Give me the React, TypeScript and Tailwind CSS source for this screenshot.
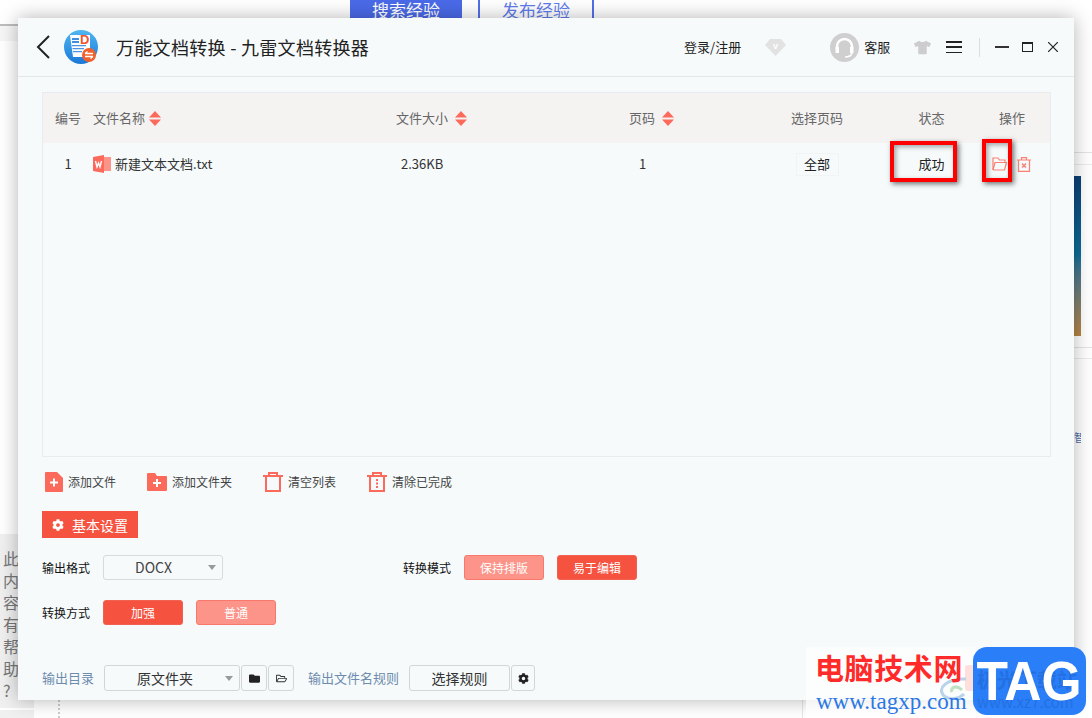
import React from "react";
import { FaCog, FaFolder, FaRegFolderOpen, FaTshirt } from "react-icons/fa";

const font = { fontFamily: '"Noto Sans CJK SC", "Liberation Sans", sans-serif' };

function Sort({ wide }: { wide?: boolean }) {
  return (
    <svg width="12" height="15" viewBox="0 0 12 15" className={wide ? "ml-[7px] shrink-0" : "ml-[4px] shrink-0"}>
      <path d="M6 0 L12 6.5 H0 Z M0 8.5 H12 L6 15 Z" fill="#fb6a5b" />
    </svg>
  );
}

function Logo() {
  return (
    <svg width="34" height="34" viewBox="0 0 34 34" className="ml-[14px] shrink-0">
      <defs>
        <linearGradient id="lg" x1="0" y1="0" x2="0" y2="1">
          <stop offset="0" stopColor="#4fb6f2" />
          <stop offset="1" stopColor="#1a78d8" />
        </linearGradient>
      </defs>
      <circle cx="17" cy="17" r="17" fill="url(#lg)" />
      <path d="M6 5 H26 V27 H9 Z" fill="#fff" />
      <path d="M8 8 H15 V10 H8 Z M8 11 H15 V13 H8 Z" fill="#3f8fe0" />
      <path d="M8 15 H22 V16.200 H8 Z M8.500 18 H20 V19.200 H8.500 Z M9 21 H18 V22.200 H9 Z" fill="#4a94e0" />
      <text x="16" y="14" fontSize="13" fontWeight="700" fill="#f0562f" fontFamily="Liberation Sans">D</text>
      <circle cx="25" cy="25" r="7" fill="#f0602c" />
      <path d="M21 23.500 H29 M21 23.500 L23.500 21.500 M29 26.500 H21 M29 26.500 L26.500 28.500" stroke="#fff" strokeWidth="1.300" fill="none" />
    </svg>
  );
}

function AddFile() {
  return (
    <svg width="18" height="20" viewBox="0 0 18 20">
      <path d="M0 1 Q0 0 1 0 H12 L18 6 V19 Q18 20 17 20 H1 Q0 20 0 19 Z" fill="#fb6a5b" />
      <path d="M8 6.500 H10 V9.500 H13 V11.500 H10 V14.500 H8 V11.500 H5 V9.500 H8 Z" fill="#fff" />
    </svg>
  );
}

function AddFolder() {
  return (
    <svg width="20" height="18" viewBox="0 0 20 18">
      <path d="M0 1 Q0 0 1 0 H8 L10 3 H19 Q20 3 20 4 V17 Q20 18 19 18 H1 Q0 18 0 17 Z" fill="#fb6a5b" />
      <path d="M9 6 H11 V9 H14 V11 H11 V14 H9 V11 H6 V9 H9 Z" fill="#fff" />
    </svg>
  );
}

function TrashOutline({ dots }: { dots?: boolean }) {
  return (
    <svg width="20" height="20" viewBox="0 0 20 20" fill="none" stroke="#fb6a5b" strokeWidth="2">
      <path d="M0 4 H20" />
      <path d="M6 4 V1 H14 V4" />
      <path d="M3 4 V19 H17 V4" />
      {dots && <path d="M10 7 V9 M10 10.500 V12.500 M10 14 V16" />}
    </svg>
  );
}

function Action({ icon, label, className }: { icon: React.ReactNode; label: string; className: string }) {
  return (
    <div className={`flex items-center ${className}`}>
      {icon}
      <span className="ml-[5px] text-[12px] text-[#444] leading-none">{label}</span>
    </div>
  );
}

function RedButton({ label, light, className }: { label: string; light?: boolean; className?: string }) {
  return (
    <div
      className={`flex h-[25px] w-[80px] items-center justify-center rounded-[3px] border text-[12px] text-white ${
        light ? "border-[#f9786c] bg-[#fd9489]" : "border-[#f2604f] bg-[#f55240]"
      } ${className ?? ""}`}
    >
      {label}
    </div>
  );
}

function Caret() {
  return <div className="h-0 w-0 border-x-[4px] border-t-[5px] border-x-transparent border-t-[#999]" />;
}

export default function App() {
  return (
    <div className="relative h-[718px] w-[1092px] overflow-hidden bg-white" style={font}>
      {/* page behind the window */}
      <div className="absolute left-0 top-[24px] h-[17px] w-[18px] border-t-2 border-[#bdbdbd] bg-[#f6f6f6]" />
      <div className="absolute left-[350px] top-0 flex h-[18px] w-[112px] items-end justify-center overflow-hidden bg-[#4a6ae8] text-[17px] leading-[22px] text-white">
        <span className="translate-y-[3px]">搜索经验</span>
      </div>
      <div className="absolute left-[478px] top-0 flex h-[18px] w-[116px] items-end justify-center overflow-hidden border-x-2 border-[#5270ea] text-[17px] leading-[22px] text-[#5f7cec]">
        <span className="translate-y-[3px]">发布经验</span>
      </div>
      <div className="absolute left-[1074px] top-[152px] h-[1px] w-[18px] bg-[#e4e4e4]" />
      <div className="absolute left-[1074px] top-[164px] h-[1px] w-[18px] bg-[#ececec]" />
      <div className="absolute left-[1074px] top-[176px] h-[160px] w-[7px] bg-gradient-to-b from-[#0c3f78] via-[#0e6f9a] to-[#b9853f]" />
      <div className="absolute left-[1074px] top-[347px] h-[1px] w-[18px] bg-[#e4e4e4]" />
      <div className="absolute left-[1074px] top-[358px] h-[1px] w-[18px] bg-[#ececec]" />
      <div className="absolute left-[1074px] top-[431px] w-[7px] overflow-hidden text-[11px] leading-[12px] text-[#4b6fa5]">
        <span className="block w-[12px]">智</span>
      </div>
      <div className="absolute left-0 top-[534px] h-[174px] w-[34px] bg-[#f0f0f0] pl-[3px] pt-[13px] text-[16px] leading-[22px] text-[#777]">
        <div>此</div>
        <div>内</div>
        <div>容</div>
        <div>有</div>
        <div>帮</div>
        <div>助</div>
        <div>?</div>
      </div>
      <div className="absolute left-0 top-[710px] h-[8px] w-[34px] bg-[#f0f0f0]" />
      <div className="absolute left-[58px] top-[700px] h-[18px] border-l-2 border-dotted border-[#ccc]" />
      <div className="absolute left-[802px] top-[700px] h-[18px] border-l border-[#e6e6e6]" />

      {/* converter window */}
      <div className="absolute left-[18px] top-[18px] flex h-[682px] w-[1056px] flex-col bg-[#f6fafb] shadow-[0_0_18px_rgba(0,0,0,0.3)]">
        {/* title bar */}
        <div className="flex h-[59px] shrink-0 items-center border-b border-[#e3e6ea]">
          <svg width="14" height="24" viewBox="0 0 14 24" fill="none" stroke="#222" strokeWidth="2" className="ml-[18px] shrink-0">
            <path d="M13 1 L2 12 L13 23" />
          </svg>
          <Logo />
          <span className="ml-[18px] whitespace-nowrap text-[18px] leading-none tracking-[0.3px] text-[#222]">万能文档转换 - 九雷文档转换器</span>
          <span className="ml-[315px] whitespace-nowrap text-[13px] text-[#222]">登录/注册</span>
          <svg width="21" height="17" viewBox="0 0 21 17" className="ml-[24px]">
            <path d="M5 0 H16 L21 6 L10.500 17 L0 6 Z" fill="#e2e2e2" />
            <text x="10.500" y="10" textAnchor="middle" fontSize="9" fontWeight="700" fill="#fff" fontFamily="Liberation Sans">v</text>
          </svg>
          <svg width="29" height="29" viewBox="0 0 29 29" className="ml-[44px]">
            <circle cx="14.500" cy="14.500" r="14.500" fill="#cfcfcf" />
            <path d="M7 17 V13.500 a7.500 7.500 0 0 1 15 0 V17" stroke="#fff" strokeWidth="2.500" fill="none" />
            <path d="M5.500 14 h3.500 v6 h-3.500 Z M20 14 h3.500 v6 h-3.500 Z" fill="#fff" />
            <path d="M22 20 q-1 4 -7 4" stroke="#fff" strokeWidth="1.500" fill="none" />
          </svg>
          <span className="ml-[5px] text-[13px] text-[#222]">客服</span>
          <FaTshirt className="ml-[24px] text-[17px] text-[#cdcdcd]" />
          <div className="ml-[15px] flex h-[12px] w-[16px] flex-col justify-between">
            <div className="h-[1.5px] bg-[#222]" />
            <div className="h-[1.5px] bg-[#222]" />
            <div className="h-[1.5px] bg-[#222]" />
          </div>
          <div className="ml-[17px] h-[19px] w-[1px] bg-[#dcdfe2]" />
          <div className="ml-[15px] h-[2px] w-[14px] bg-[#333]" />
          <div className="ml-[13px] h-[10px] w-[11px] border-[1.5px] border-t-[2.5px] border-[#222]" />
          <svg width="10" height="10" viewBox="0 0 10 10" stroke="#222" strokeWidth="1.200" className="ml-[15px]">
            <path d="M0 0 L10 10 M10 0 L0 10" />
          </svg>
        </div>

        {/* body */}
        <div className="flex flex-1 flex-col pl-[24px] pr-[23px] pt-[15px]">
          {/* table */}
          <div className="h-[365px] shrink-0 border border-[#e9ecef]">
            <div className="flex h-[50px] items-center bg-[#f4f3f2] text-[13px] text-[#666]">
              <div className="w-[50px] text-center">编号</div>
              <div className="flex w-[303px] items-center">文件名称<Sort /></div>
              <div className="flex w-[233px] items-center">文件大小<Sort wide /></div>
              <div className="flex w-[141px] items-center">页码<Sort wide /></div>
              <div className="w-[94px] text-center">选择页码</div>
              <div className="w-[135px] text-center">状态</div>
              <div>操作</div>
            </div>
            <div className="flex h-[42px] items-center text-[13px] text-[#333]">
              <div className="w-[50px] text-center">1</div>
              <div className="flex w-[303px] items-center">
                <svg width="18" height="18" viewBox="0 0 18 18">
                  <path d="M0 2 L11 0 V18 L0 16 Z" fill="#fb6a5b" />
                  <path d="M11 2 H18 V16 H11 Z" fill="#fd9489" />
                  <path d="M2.500 6 L4 12 L5.500 8 L7 12 L8.500 6" stroke="#fff" strokeWidth="1.400" fill="none" />
                </svg>
                <span className="ml-[4px]">新建文本文档.txt</span>
              </div>
              <div className="w-[233px] pl-[5px]">2.36KB</div>
              <div className="w-[141px] pl-[10px]">1</div>
              <div className="flex w-[94px] justify-center">
                <div className="flex h-[23px] w-[43px] items-center justify-center border border-[#f1f3f4] text-[#222]">全部</div>
              </div>
              <div className="w-[135px] text-center text-[#222]">成功</div>
              <div className="ml-[-7px] flex items-center">
                <svg width="15" height="14" viewBox="0 0 15 14" fill="none" stroke="#fb8074" strokeWidth="1.200">
                  <path d="M1 13 V1 H6 L7.500 3 H13 V5.500" />
                  <path d="M1 13 H12.500 L14.500 5.500 H3 L1 13" />
                </svg>
                <svg width="14" height="15" viewBox="0 0 14 15" fill="none" stroke="#fb8074" strokeWidth="1.200" className="ml-[10px]">
                  <path d="M0 3 H14 M4.500 3 V0.700 H9.500 V3 M1.500 3 V14.300 H12.500 V3" />
                  <path d="M5 6.500 L9 10.500 M9 6.500 L5 10.500" strokeWidth="1.500" />
                </svg>
              </div>
            </div>
          </div>

          {/* file actions */}
          <div className="mt-[13px] flex h-[24px] shrink-0 items-center">
            <Action className="ml-[3px] w-[102px]" icon={<AddFile />} label="添加文件" />
            <Action className="w-[116px]" icon={<AddFolder />} label="添加文件夹" />
            <Action className="w-[105px]" icon={<TrashOutline />} label="清空列表" />
            <Action className="ml-[-1px]" icon={<TrashOutline dots />} label="清除已完成" />
          </div>

          {/* settings tab */}
          <div className="mt-[17px] flex h-[27px] w-[96px] shrink-0 items-center bg-[#f55240] pl-[10px] text-[14px] leading-none text-white">
            <FaCog className="text-[12px]" />
            <span className="ml-[8px] whitespace-nowrap">基本设置</span>
          </div>

          {/* format */}
          <div className="mt-[17px] flex h-[25px] shrink-0 items-center">
            <div className="w-[61px] text-[12px] text-[#111]">输出格式</div>
            <div className="flex h-[25px] w-[120px] items-center rounded-[3px] border border-[#d8dadc] pl-[31px] pr-[6px] text-[14px] text-[#444]">
              <span className="flex-1">DOCX</span>
              <Caret />
            </div>
            <div className="ml-[180px] w-[61px] text-[12px] text-[#111]">转换模式</div>
            <RedButton light label="保持排版" />
            <RedButton label="易于编辑" className="ml-[13px]" />
          </div>

          {/* method */}
          <div className="mt-[20px] flex h-[25px] shrink-0 items-center">
            <div className="w-[61px] text-[12px] text-[#111]">转换方式</div>
            <RedButton label="加强" />
            <RedButton light label="普通" className="ml-[13px]" />
          </div>

          {/* output */}
          <div className="mt-[40px] flex h-[26px] shrink-0 items-center">
            <div className="w-[62px] text-[13px] text-[#6d8bad]">输出目录</div>
            <div className="flex h-[26px] w-[136px] items-center rounded-[3px] border border-[#d3d6d9] pl-[32px] pr-[6px] text-[14px] text-[#333]">
              <span className="flex-1">原文件夹</span>
              <Caret />
            </div>
            <div className="ml-[1px] flex h-[26px] w-[26px] items-center justify-center rounded-[3px] border border-[#d3d6d9]">
              <FaFolder className="text-[11px] text-[#222]" />
            </div>
            <div className="ml-[1px] flex h-[26px] w-[26px] items-center justify-center rounded-[3px] border border-[#d3d6d9]">
              <FaRegFolderOpen className="text-[11px] text-[#333]" />
            </div>
            <div className="ml-[14px] w-[101px] text-[13px] text-[#6d8bad]">输出文件名规则</div>
            <div className="flex h-[26px] w-[101px] items-center justify-center rounded-[3px] border border-[#d3d6d9] text-[14px] text-[#333]">选择规则</div>
            <div className="ml-[1px] flex h-[26px] w-[24px] items-center justify-center rounded-[3px] border border-[#d3d6d9]">
              <FaCog className="text-[11px] text-[#222]" />
            </div>
            <div className="ml-[auto] flex h-[26px] w-[86px] items-center justify-center rounded-[3px] bg-[#fd9489] text-[13px] text-white">开始处理</div>
          </div>
        </div>

        {/* annotation boxes */}
        <div className="absolute left-[872px] top-[123px] h-[41px] w-[67px] border-[4px] border-[#ff0000] shadow-[2px_2px_5px_rgba(0,0,0,0.55),inset_2px_2px_5px_rgba(0,0,0,0.35)]" />
        <div className="absolute left-[964px] top-[121px] h-[43px] w-[30px] border-[4px] border-[#ff0000] shadow-[2px_2px_5px_rgba(0,0,0,0.55),inset_2px_2px_5px_rgba(0,0,0,0.35)]" />
      </div>

      {/* watermark */}
      <div className="absolute left-[806px] top-[647px] h-[71px] w-[170px] bg-white/70">
        <svg width="36" height="26" viewBox="0 0 36 26" className="absolute left-[130px] top-[29px]" fill="none">
          <path d="M30 3 C12 2 0 12 8 20 C14 25 24 22 28 18" stroke="#b9d3e8" strokeWidth="3" />
          <path d="M26 14 C20 8 14 12 16 16" stroke="#bfe0c0" strokeWidth="3" />
        </svg>
        <div className="absolute left-[9px] top-[3px] whitespace-nowrap text-[29px] font-bold leading-[34px] tracking-[0.6px] text-[#ff2a2a]">电脑技术网</div>
        <div className="absolute left-[10px] top-[41px] whitespace-nowrap text-[23px] leading-[27px] text-[#2b78e4]" style={{ fontFamily: '"Liberation Serif", serif' }}>www.tagxp.com</div>
      </div>
      <div className="absolute left-[973px] top-[647px] flex h-[68px] w-[113px] items-center justify-center overflow-hidden rounded-[14px] bg-[#2a7ef8]">
        <span className="absolute left-[4px] top-[20px] whitespace-nowrap text-[20px] font-bold leading-[26px] text-[#2470e2]">极光下载站</span>
        <span className="absolute left-[4px] top-[47px] whitespace-nowrap text-[15px] leading-[16px] text-[#2470e2]">www.xz7.com</span>
        <span className="relative origin-center scale-x-[0.92] text-[56px] font-bold leading-none text-white" style={{ fontFamily: '"Liberation Sans", sans-serif' }}>TAG</span>
      </div>
    </div>
  );
}
